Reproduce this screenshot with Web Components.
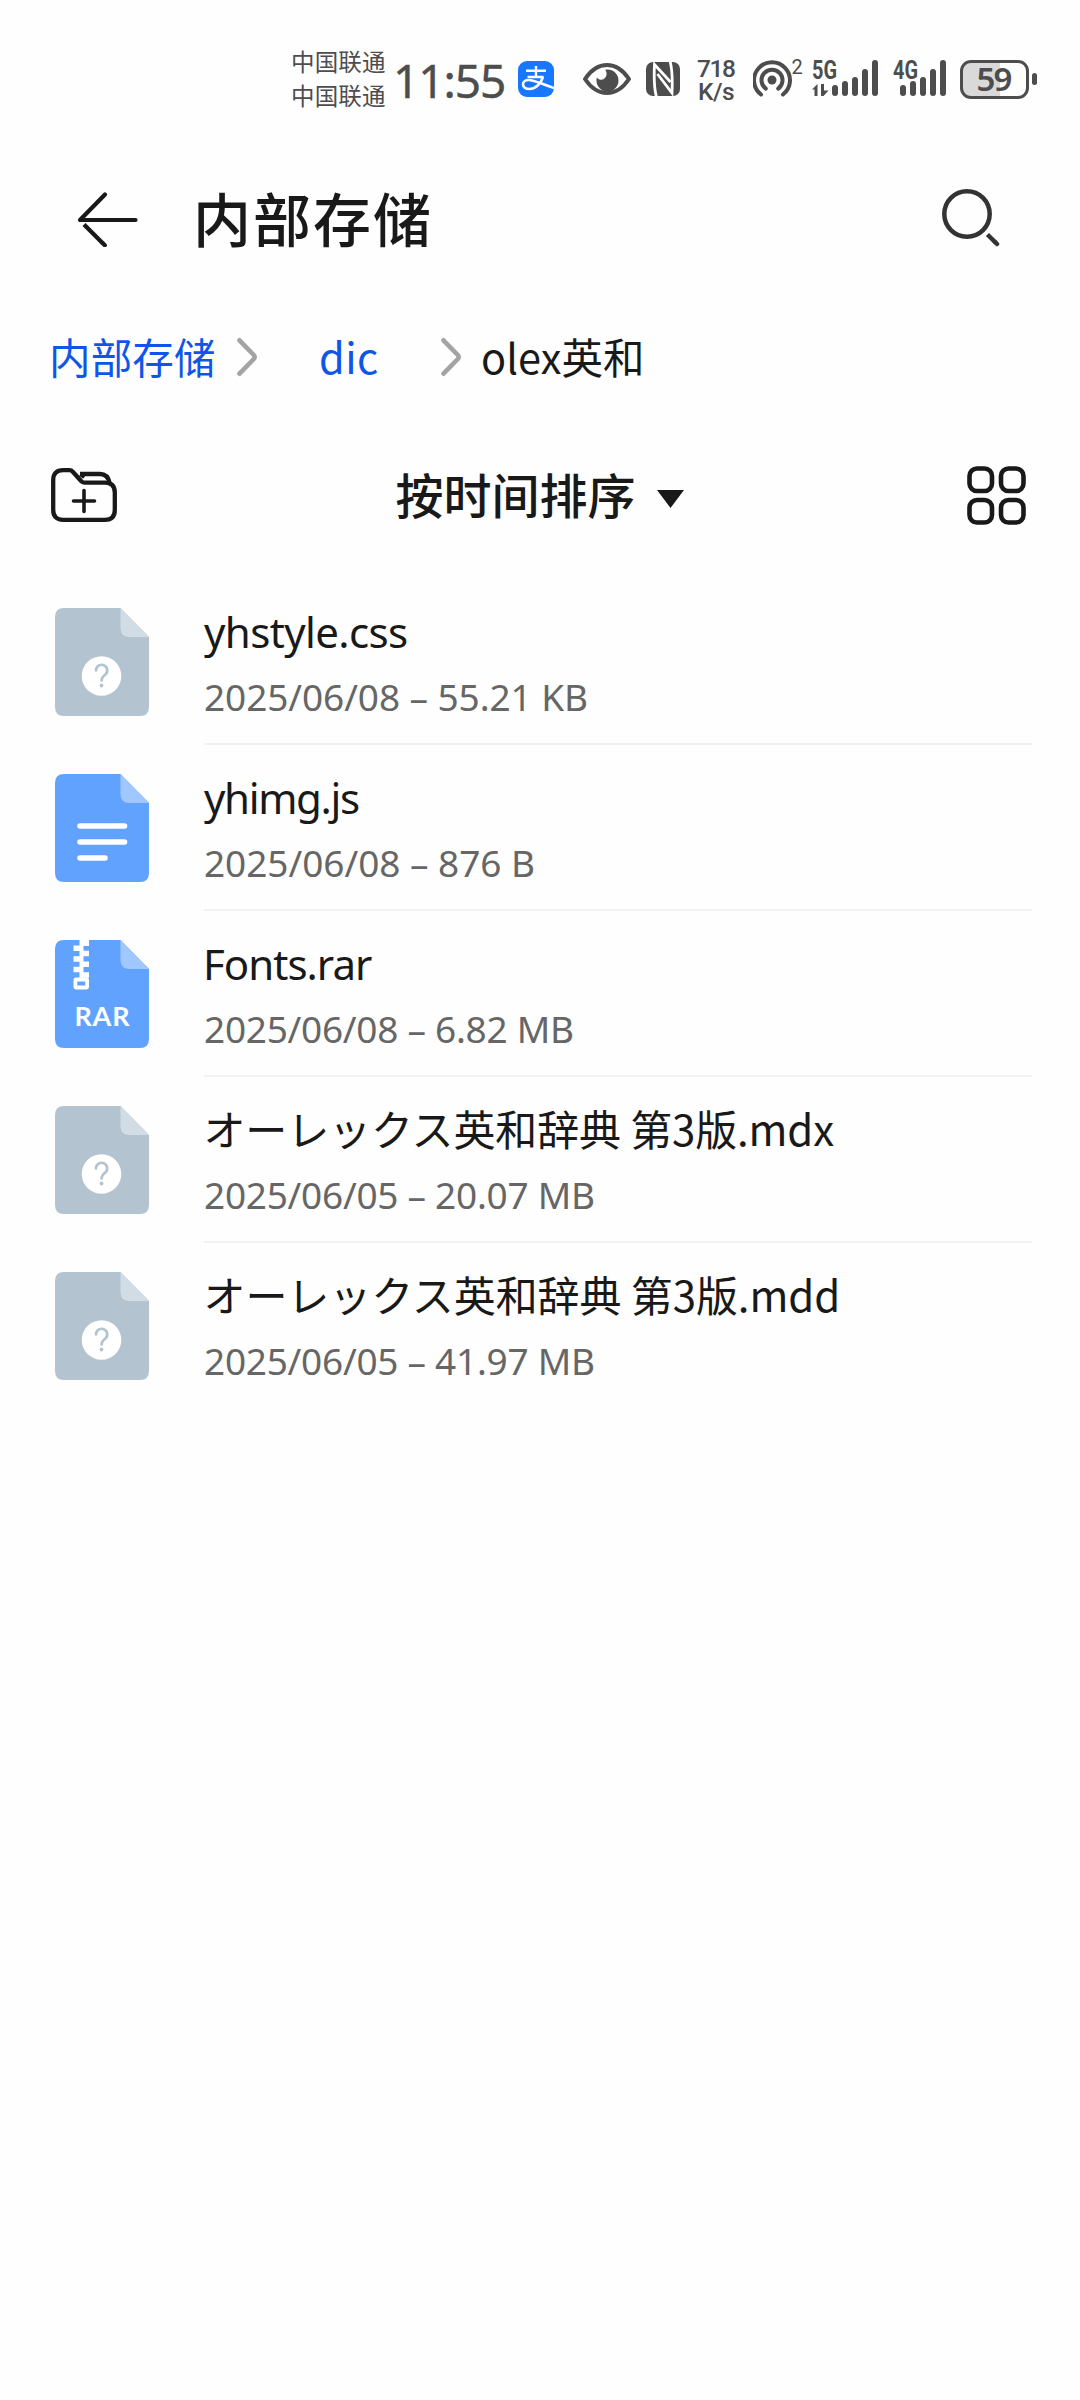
<!DOCTYPE html>
<html lang="zh-CN">
<head>
<meta charset="utf-8">
<title>内部存储</title>
<style>
  body {
    margin: 0;
    background: #fefefe;
    color: #191919;
    font-family: "Noto Sans", "Noto Sans CJK SC", sans-serif;
  }
</style>
</head>
<body>
<file-browser></file-browser>

<script>
function define(name, html, setup) {
  const template = document.createElement('template');
  template.innerHTML = html;
  customElements.define(name, class extends HTMLElement {
    connectedCallback() {
      if (this.shadowRoot) return;
      this.attachShadow({ mode: 'open' }).append(template.content.cloneNode(true));
      if (setup) setup.call(this, this.shadowRoot);
    }
  });
}

// One line of text whose visible ink spans exactly `ink` pixels.
class InkText extends HTMLElement {
  connectedCallback() {
    if (this.shadowRoot) return;
    this.attachShadow({ mode: 'open' }).innerHTML = `
      <style>
        :host { display: block; flex: none; white-space: nowrap; }
        span { display: inline-block; }
      </style>
      <span><slot></slot></span>
    `;
    const span = this.shadowRoot.querySelector('span');
    const text = this.textContent;
    const target = Number(this.getAttribute('ink'));
    const style = getComputedStyle(this);
    const ctx = document.createElement('canvas').getContext('2d');
    ctx.font = `${style.fontWeight} ${style.fontSize} ${style.fontFamily}`;
    const m = ctx.measureText(text);
    const ink = m.actualBoundingBoxLeft + m.actualBoundingBoxRight;
    this.style.width = `${target}px`;
    span.style.marginLeft = `${m.actualBoundingBoxLeft}px`;
    span.style.letterSpacing = `${(target - ink) / (text.length - 1)}px`;
  }
}
customElements.define('ink-text', InkText);

define('signal-bars', `
  <style>
    :host { display: block; }
    svg { display: block; overflow: visible; }
    text { font: 700 25px Roboto, sans-serif; fill: #4d4d4d; }
  </style>
  <svg height="48" fill="#4d4d4d" stroke="#4d4d4d">
    <text stroke="none" x="0" y="23.500" textLength="25" lengthAdjust="spacingAndGlyphs"></text>
    <g id="bars" stroke-width="6" stroke-linecap="round"></g>
    <path id="data" stroke="none" d="M0 34.500l5.500-5.500v12h-3v-6.500zM9 29h3v6.500h4.500l-5 5.500h-2.500z"/>
  </svg>
`, function (root) {
  const start = Number(this.getAttribute('start'));
  root.querySelector('svg').setAttribute('width', start + 43);
  root.querySelector('text').textContent = this.getAttribute('label');
  root.querySelector('#bars').innerHTML = [33, 29, 25, 17, 8].map((top, i) =>
    `<path d="M${start + i * 10} ${top}V38"/>`).join('');
  if (!this.hasAttribute('data')) root.querySelector('#data').remove();
});

define('battery-level', `
  <style>
    :host { display: flex; align-items: center; gap: 3px; }
    .cell {
      box-sizing: border-box;
      width: 69px;
      height: 39px;
      border: 3px solid #4d4d4d;
      border-radius: 11px;
      display: flex;
      justify-content: center;
      background: linear-gradient(90deg, #d9d9d9 37px, transparent 37px);
      font-size: 33px;
      font-weight: 600;
      line-height: 32px;
    }
    .nub { width: 5px; height: 12px; border-radius: 2.500px; background: #4d4d4d; }
  </style>
  <div class="cell"><ink-text ink="34">59</ink-text></div>
  <div class="nub"></div>
`);

define('status-bar', `
  <style>
    :host {
      display: flex;
      align-items: center;
      box-sizing: border-box;
      height: 158px;
      padding-left: 293px;
      color: #4d4d4d;
    }
    svg { display: block; flex: none; }
    .carrier { font: 23.500px/34px "Noto Sans CJK SC", sans-serif; padding-bottom: 2px; }
    .time { margin-left: 12px; font-size: 46px; line-height: 48px; font-weight: 400; -webkit-text-stroke: .4px; padding-top: 1px; }
    .pay { margin-left: 14px; }
    .eye { margin-left: 29px; }
    .nfc { margin-left: 15px; }
    .speed { margin: 0 0 0 17px; padding-top: 3px; font: 500 24.500px/22.500px Roboto, sans-serif; }
    .speed ink-text + ink-text { margin-left: 2px; }
    .hotspot { margin-left: 18px; }
    .hotspot text { font: 20px Roboto, sans-serif; fill: #4d4d4d; }
    .first { margin-left: 9px; }
    .second { margin-left: 15px; }
    battery-level { margin-left: 14px; }
  </style>
  <div class="carrier">
    <ink-text ink="92">中国联通</ink-text>
    <ink-text ink="92">中国联通</ink-text>
  </div>
  <ink-text class="time" ink="107">11:55</ink-text>
  <svg class="pay" width="36" height="36" viewBox="0 0 36 36">
    <rect width="36" height="36" rx="9" fill="#1777ff"/>
    <g fill="none" stroke="#fff">
      <path stroke-width="2.400" d="M8 9.800h20M18 5v11M9.500 16h16"/>
      <path stroke-width="2.600" d="M25 16c-2 6-7 12-13.500 12-4 0-6.500-2-6.500-4.700 0-2.600 2.400-4.300 5.500-4.300 6 0 14 4.500 25.500 8"/>
    </g>
  </svg>
  <svg class="eye" width="48" height="34" viewBox="0 0 48 34">
    <path fill="none" stroke="#4d4d4d" stroke-width="4" stroke-linejoin="round" d="M2 17C8 8 15 3 24 3s16 5 22 14c-6 9-13 14-22 14S8 26 2 17z"/>
    <path fill="#4d4d4d" d="M24.500 7.500a11 11 0 1 1-11 11c0-1.200.1-2 .4-3 2 2.800 5 2.800 7 1.500 3-2 3.600-6 1.300-9.200z"/>
  </svg>
  <svg class="nfc" width="34" height="34" viewBox="0 0 34 34">
    <rect width="34" height="34" rx="7" fill="#4d4d4d"/>
    <path fill="none" stroke="#fff" stroke-width="2.800" d="M10.500 35C8.500 28 8 12 8.500 2.500L24.500 20M11.500 12L26 31C26.500 20 26.500 8 24 -1"/>
  </svg>
  <div class="speed">
    <ink-text ink="38">718</ink-text>
    <ink-text ink="35">K/s</ink-text>
  </div>
  <svg class="hotspot" width="50" height="48" viewBox="-19 -25 50 48">
    <circle r="4.500" fill="#4d4d4d"/>
    <g fill="none" stroke="#4d4d4d" stroke-width="4" stroke-linecap="round">
      <path d="M-6.200 8.600a10.500 10.500 0 1 1 12.400 0"/>
      <path d="M-11 14.500a18 18 0 1 1 22 0"/>
    </g>
    <text x="19.500" y="-6">2</text>
  </svg>
  <signal-bars class="first" label="5G" start="23" data></signal-bars>
  <signal-bars class="second" label="4G" start="10"></signal-bars>
  <battery-level></battery-level>
`);

define('title-bar', `
  <style>
    :host { display: flex; align-items: center; box-sizing: border-box; height: 120px; padding: 1px 80px 0 76px; }
    svg { display: block; flex: none; }
    .title {
      margin: 0 auto 0 60px;
      padding-bottom: 3px;
      font: 500 58px/80px "Noto Sans CJK SC", sans-serif;
    }
  </style>
  <svg width="62" height="56" viewBox="0 0 62 56" fill="none" stroke="#191919" stroke-width="4.200" stroke-linecap="round" stroke-linejoin="round">
    <path d="M29 3.500L4 29h55.500"/>
    <path stroke-linecap="butt" d="M8 33.500l19 19"/>
    <path d="M26.800 52.300l2 2"/>
  </svg>
  <ink-text class="title" ink="231">内部存储</ink-text>
  <svg width="58" height="60" viewBox="0 0 58 60" fill="none" stroke="#333" stroke-width="4.500">
    <circle cx="25" cy="25" r="22.700"/>
    <path d="M45.500 45.500l8.500 8.500"/>
    <path stroke-linecap="round" d="M53 53l2 2"/>
  </svg>
`);

define('path-chevron', `
  <style>
    :host { display: block; flex: none; }
    svg { display: block; }
  </style>
  <svg width="20" height="40" viewBox="0 0 20 40" fill="none" stroke="#a3a3a3" stroke-width="4.600" stroke-linecap="round" stroke-linejoin="round">
    <path d="M2.500 3.300L16.800 18q1.600 2 0 4L2.500 36.700"/>
  </svg>
`);

define('path-bar', `
  <style>
    :host {
      display: flex;
      align-items: center;
      height: 158px;
      padding-left: 53px;
      font: 41.500px/60px "Noto Sans CJK SC", sans-serif;
    }
    ink-text { padding-bottom: 3px; }
    .link { color: #0f56e8; }
    .root { margin-right: 23px; }
    .dir { margin: 0 64px; }
    .here { margin-left: 22px; }
  </style>
  <ink-text class="link root" ink="161">内部存储</ink-text>
  <path-chevron></path-chevron>
  <ink-text class="link dir" ink="56">dic</ink-text>
  <path-chevron></path-chevron>
  <ink-text class="here" ink="158">olex英和</ink-text>
`);

define('sort-bar', `
  <style>
    :host {
      display: flex;
      align-items: center;
      justify-content: space-between;
      box-sizing: border-box;
      height: 118px;
      padding: 0 54px 0 51px;
    }
    svg { display: block; flex: none; }
    .sort {
      display: flex;
      align-items: center;
      gap: 23px;
      margin-left: -4px;
      font: 500 48px/66px "Noto Sans CJK SC", sans-serif;
    }
    .arrow { margin-top: 8px; }
    ink-text { padding-bottom: 5px; }
  </style>
  <svg width="66" height="54" viewBox="0 0 66 54" fill="none" stroke="#191919" stroke-width="4.300" stroke-linejoin="round">
    <path d="M12 2.200h6.500q2 0 3.300 1.600l8.500 9.400q1.500 1.500 3.500 1.500H54q9.800 0 9.800 10V42q0 9.800-9.800 9.800H12Q2.200 51.800 2.200 42V12Q2.200 2.200 12 2.200z"/>
    <path d="M29 6h20q8 0 9.800 9.500M29.500 6l4 3"/>
    <path stroke-width="3.600" stroke-linecap="round" d="M33 22.500v21M22.500 33h21"/>
  </svg>
  <div class="sort">
    <ink-text ink="237">按时间排序</ink-text>
    <svg class="arrow" width="27" height="18" viewBox="0 0 27 18"><path fill="#191919" d="M0 0h27L13.500 18z"/></svg>
  </div>
  <svg width="59" height="59" viewBox="0 0 59 59" fill="none" stroke="#191919" stroke-width="4.600">
    <rect x="2.500" y="2.500" width="22.500" height="22.500" rx="7.500"/>
    <rect x="34" y="2.500" width="22.500" height="22.500" rx="7.500"/>
    <rect x="2.500" y="34" width="22.500" height="22.500" rx="7.500"/>
    <rect x="34" y="34" width="22.500" height="22.500" rx="7.500"/>
  </svg>
`);

const MARKS = {
  unknown: `
    <circle cx="46.500" cy="68" r="19.800" fill="#fff"/>
    <g fill="none" stroke="#b3c3cf" stroke-width="2.700" stroke-linecap="round">
      <path d="M41 62.500a5.600 5.600 0 1 1 8.800 4.500q-3.200 2.200-3.200 5.500"/>
    </g>
    <circle cx="46.500" cy="77.500" r="1.900" fill="#b3c3cf"/>
  `,
  text: `
    <path stroke="#fff" stroke-width="5.600" stroke-linecap="round" d="M25 52h44.500M25 68h44.500M25 84h25"/>
  `,
  rar: `
    <path fill="#fff" d="M24.500 0h9.500v6h-9.500zM18.500 5.500h10v5.500h-10zM24.500 10.800h9.500v5.500h-9.500zM18.500 16.200h10v5.500h-10zM24.500 21.500h9.500v5.500h-9.500zM18.500 26.800h10v5.500h-10zM24.500 32.200h9.500v5.500h-9.500z"/>
    <rect x="20.400" y="39.500" width="11.700" height="8" rx=".5" fill="none" stroke="#fff" stroke-width="3.800"/>
    <text x="19.500" y="86" textLength="55" lengthAdjust="spacing">RAR</text>
  `
};

define('file-icon', `
  <style>
    :host { display: block; flex: none; }
    svg { display: block; }
    text { font: 700 27px Lato, sans-serif; font-kerning: none; fill: #fff; }
  </style>
  <svg width="94" height="108" viewBox="0 0 94 108">
    <path id="sheet" d="M9 0h56.500L94 29v70q0 9-9 9H9q-9 0-9-9V9q0-9 9-9z"/>
    <path id="fold" d="M65.500 0L94 29H74.500q-9 0-9-9z"/>
    <g id="mark"></g>
  </svg>
`, function (root) {
  const kind = this.getAttribute('kind');
  const unknown = kind === 'unknown';
  root.querySelector('#sheet').setAttribute('fill', unknown ? '#b3c3cf' : '#61a2ff');
  root.querySelector('#fold').setAttribute('fill', unknown ? '#d1dce4' : '#a0c7ff');
  root.querySelector('#mark').innerHTML = MARKS[kind];
});

define('file-row', `
  <style>
    :host { display: flex; height: 166px; padding: 0 48px 0 55px; }
    file-icon { margin-top: 29px; }
    .info {
      flex: 1;
      box-sizing: border-box;
      margin-left: 55px;
      padding-top: 25px;
      border-bottom: 2px solid #f2f2f2;
    }
    :host([last]) .info { border-bottom: 0; }
    .name { padding-left: var(--bearing, 0); font-size: 42px; line-height: 56px; }
    .meta { margin: 15px 0 0 1px; font-size: 37px; line-height: 44px; color: #666; }
    :host([cjk]) .name { font-family: "Noto Sans CJK JP", sans-serif; margin: -2px 0 17px; }
  </style>
  <div class="info"></div>
`, function (root) {
  const get = (key) => this.getAttribute(key);
  const info = root.querySelector('.info');
  info.insertAdjacentHTML('beforebegin', `<file-icon kind="${get('kind')}"></file-icon>`);
  info.innerHTML = `
    <ink-text class="name" ink="${get('name-width')}">${get('name')}</ink-text>
    <ink-text class="meta" ink="${get('meta-width')}">${get('date')} – ${get('size')}</ink-text>
  `;
});

define('file-browser', `
  <style>
    :host { display: flex; flex-direction: column; min-height: 2400px; width: 1080px; }
    .files { padding-top: 25px; }
    [cjk] { --bearing: 2.500px; }
    [kind="rar"] { --bearing: 3px; }
  </style>
  <status-bar></status-bar>
  <title-bar></title-bar>
  <path-bar></path-bar>
  <sort-bar></sort-bar>
  <div class="files">
    <file-row kind="unknown" name="yhstyle.css" name-width="203" date="2025/06/08" size="55.21 KB" meta-width="382"></file-row>
    <file-row kind="text" name="yhimg.js" name-width="155" date="2025/06/08" size="876 B" meta-width="329"></file-row>
    <file-row kind="rar" name="Fonts.rar" name-width="165" date="2025/06/08" size="6.82 MB" meta-width="368"></file-row>
    <file-row cjk kind="unknown" name="オーレックス英和辞典 第3版.mdx" name-width="629" date="2025/06/05" size="20.07 MB" meta-width="389"></file-row>
    <file-row cjk kind="unknown" name="オーレックス英和辞典 第3版.mdd" name-width="632" date="2025/06/05" size="41.97 MB" meta-width="389" last></file-row>
  </div>
`);
</script>
</body>
</html>
